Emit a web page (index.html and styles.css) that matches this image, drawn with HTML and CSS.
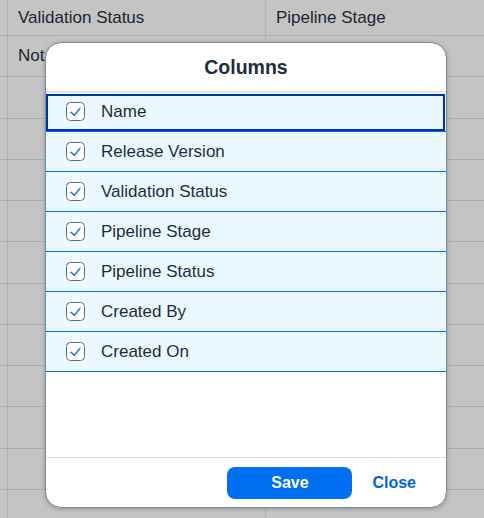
FILE: index.html
```html
<!DOCTYPE html>
<html lang="en">
<head>
<meta charset="utf-8">
<title>Columns</title>
<link rel="stylesheet" href="styles.css">
</head>
<body>
<div class="table">
  <div class="tr head"><div class="c0"></div><div class="c1">Validation Status</div><div class="c2">Pipeline Stage</div></div>
  <div class="tr"><div class="c0"></div><div class="c1">Not Started</div><div class="c2"></div></div>
  <div class="tr"><div class="c0"></div><div class="c1"></div><div class="c2"></div></div>
  <div class="tr"><div class="c0"></div><div class="c1"></div><div class="c2"></div></div>
  <div class="tr"><div class="c0"></div><div class="c1"></div><div class="c2"></div></div>
  <div class="tr"><div class="c0"></div><div class="c1"></div><div class="c2"></div></div>
  <div class="tr"><div class="c0"></div><div class="c1"></div><div class="c2"></div></div>
  <div class="tr"><div class="c0"></div><div class="c1"></div><div class="c2"></div></div>
  <div class="tr"><div class="c0"></div><div class="c1"></div><div class="c2"></div></div>
  <div class="tr"><div class="c0"></div><div class="c1"></div><div class="c2"></div></div>
  <div class="tr"><div class="c0"></div><div class="c1"></div><div class="c2"></div></div>
  <div class="tr"><div class="c0"></div><div class="c1"></div><div class="c2"></div></div>
  <div class="tr"><div class="c0"></div><div class="c1"></div><div class="c2"></div></div>
</div>

<div class="dialog" role="dialog" aria-label="Columns">
  <div class="dlg-head">Columns</div>
  <ul class="list">
    <li class="item focused"><span class="cb"><svg width="19" height="19" viewBox="0 0 19 19"><rect x="0.5" y="0.5" width="18" height="18" rx="4" fill="#fff" stroke="#5b6f84"/><path d="M5 10.2 L8.3 13.3 L14 6.3" fill="none" stroke="#0064d9" stroke-width="1.3" stroke-linecap="round" stroke-linejoin="round"/></svg></span><span class="label">Name</span></li>
    <li class="item"><span class="cb"><svg width="19" height="19" viewBox="0 0 19 19"><rect x="0.5" y="0.5" width="18" height="18" rx="4" fill="#fff" stroke="#5b6f84"/><path d="M5 10.2 L8.3 13.3 L14 6.3" fill="none" stroke="#0064d9" stroke-width="1.3" stroke-linecap="round" stroke-linejoin="round"/></svg></span><span class="label">Release Version</span></li>
    <li class="item"><span class="cb"><svg width="19" height="19" viewBox="0 0 19 19"><rect x="0.5" y="0.5" width="18" height="18" rx="4" fill="#fff" stroke="#5b6f84"/><path d="M5 10.2 L8.3 13.3 L14 6.3" fill="none" stroke="#0064d9" stroke-width="1.3" stroke-linecap="round" stroke-linejoin="round"/></svg></span><span class="label">Validation Status</span></li>
    <li class="item"><span class="cb"><svg width="19" height="19" viewBox="0 0 19 19"><rect x="0.5" y="0.5" width="18" height="18" rx="4" fill="#fff" stroke="#5b6f84"/><path d="M5 10.2 L8.3 13.3 L14 6.3" fill="none" stroke="#0064d9" stroke-width="1.3" stroke-linecap="round" stroke-linejoin="round"/></svg></span><span class="label">Pipeline Stage</span></li>
    <li class="item"><span class="cb"><svg width="19" height="19" viewBox="0 0 19 19"><rect x="0.5" y="0.5" width="18" height="18" rx="4" fill="#fff" stroke="#5b6f84"/><path d="M5 10.2 L8.3 13.3 L14 6.3" fill="none" stroke="#0064d9" stroke-width="1.3" stroke-linecap="round" stroke-linejoin="round"/></svg></span><span class="label">Pipeline Status</span></li>
    <li class="item"><span class="cb"><svg width="19" height="19" viewBox="0 0 19 19"><rect x="0.5" y="0.5" width="18" height="18" rx="4" fill="#fff" stroke="#5b6f84"/><path d="M5 10.2 L8.3 13.3 L14 6.3" fill="none" stroke="#0064d9" stroke-width="1.3" stroke-linecap="round" stroke-linejoin="round"/></svg></span><span class="label">Created By</span></li>
    <li class="item"><span class="cb"><svg width="19" height="19" viewBox="0 0 19 19"><rect x="0.5" y="0.5" width="18" height="18" rx="4" fill="#fff" stroke="#5b6f84"/><path d="M5 10.2 L8.3 13.3 L14 6.3" fill="none" stroke="#0064d9" stroke-width="1.3" stroke-linecap="round" stroke-linejoin="round"/></svg></span><span class="label">Created On</span></li>
  </ul>
  <div class="dlg-foot">
    <button class="btn btn-save" type="button">Save</button>
    <button class="btn btn-close" type="button">Close</button>
  </div>
</div>
</body>
</html>
```

FILE: styles.css
```css
html, body {
  margin: 0;
  padding: 0;
}
body {
  width: 484px;
  height: 518px;
  overflow: hidden;
  background: #c4c4c4;
  font-family: "Liberation Sans", Arial, sans-serif;
  color: #1d2d3e;
  position: relative;
}

/* background table (dimmed) */
.table {
  display: flex;
  flex-direction: column;
  height: 518px;
  overflow: hidden;
}
.tr {
  display: grid;
  grid-template-columns: 7px 258px 1fr;
  height: 41.25px;
  flex: none;
  box-sizing: border-box;
  border-bottom: 1px solid #adadad;
}
.tr.head {
  height: 36px;
}
.tr:last-child {
  flex: 1 1 auto;
  height: auto;
  min-height: 0;
  border-bottom: none;
}
.tr > div {
  border-left: 1px solid #b3b3b3;
  display: flex;
  align-items: center;
  padding-left: 10px;
  font-size: 17px;
  color: #1a2633;
  white-space: nowrap;
  overflow: hidden;
}
.tr > .c0 {
  border-left: none;
  padding: 0;
}

/* dialog */
.dialog {
  position: absolute;
  left: 45px;
  top: 42px;
  width: 402px;
  height: 466px;
  box-sizing: border-box;
  background: #fff;
  border: 1px solid #7d8995;
  border-radius: 16px;
  box-shadow: 0 1px 4px rgba(40, 50, 60, 0.35);
  display: flex;
  flex-direction: column;
  overflow: hidden;
}
.dlg-head {
  height: 49px;
  flex: none;
  box-sizing: border-box;
  border-bottom: 1px solid #d9d9d9;
  display: flex;
  align-items: center;
  justify-content: center;
  font-size: 19.5px;
  font-weight: bold;
  color: #1d2d3e;
}
.list {
  list-style: none;
  margin: 0;
  padding: 0;
  flex: 1;
}
.item {
  position: relative;
  height: 40px;
  box-sizing: border-box;
  border-bottom: 1px solid #0070f2;
  background: #ebf8ff;
  display: flex;
  align-items: center;
  padding-left: 20px;
  gap: 16px;
}
.item.focused::after {
  content: "";
  position: absolute;
  left: 0;
  right: 1px;
  top: 2px;
  bottom: 0;
  border: 2px solid #0032a5;
  pointer-events: none;
}
.cb {
  width: 19px;
  height: 19px;
  display: block;
  flex: none;
}
.cb svg {
  display: block;
}
.label {
  font-size: 17px;
  color: #1d2d3e;
  white-space: nowrap;
}

.dlg-foot {
  height: 50px;
  flex: none;
  box-sizing: border-box;
  border-top: 1px solid #d9d9d9;
  display: flex;
  align-items: center;
  justify-content: flex-end;
  padding-right: 16px;
  gap: 6px;
}
.btn {
  font-family: "Liberation Sans", Arial, sans-serif;
  font-size: 16px;
  font-weight: bold;
  height: 32px;
  border: none;
  border-radius: 8px;
  cursor: pointer;
  padding: 0;
}
.btn-save {
  width: 125px;
  background: #0070f2;
  color: #fff;
}
.btn-close {
  background: transparent;
  color: #0064d9;
  padding: 0 14px;
}
```
